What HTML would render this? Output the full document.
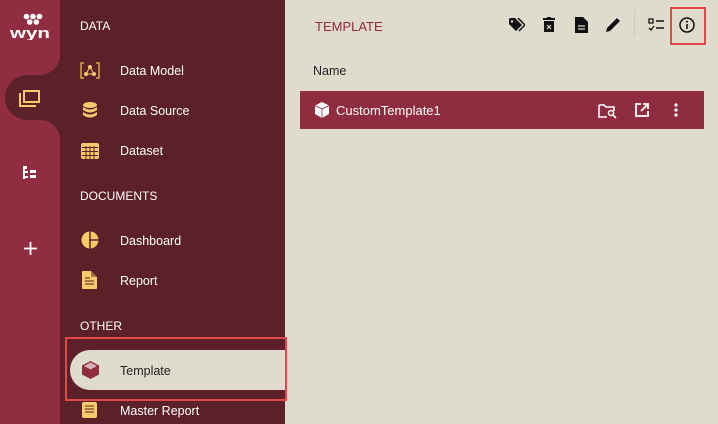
<!DOCTYPE html>
<html><head><style>
*{margin:0;padding:0;box-sizing:border-box}
body{width:718px;height:424px;overflow:hidden;background:#e0dccd;font-family:"Liberation Sans",sans-serif;position:relative}
.rail{position:absolute;left:0;top:0;width:60px;height:424px;background:#902d41}
.side{position:absolute;left:60px;top:0;width:225px;height:424px;background:#5c2029}
.bump{position:absolute;left:5px;top:75px;width:60px;height:45px;background:#5c2029;border-radius:23px 0 0 23px}
.c1{position:absolute;left:40px;top:55px;width:20px;height:20px;background:#5c2029}
.c1 i{position:absolute;left:0;top:0;width:20px;height:20px;background:#902d41;border-radius:0 0 20px 0}
.c2{position:absolute;left:40px;top:120px;width:20px;height:20px;background:#5c2029}
.c2 i{position:absolute;left:0;top:0;width:20px;height:20px;background:#902d41;border-radius:0 20px 0 0}
.t{position:absolute;color:#fff;font-size:12.5px}
.h{position:absolute;left:80px;color:#fff;font-size:12px}
.ic{position:absolute}
.pill{position:absolute;left:70px;top:350px;width:215px;height:40px;background:#e0dccd;border-radius:20px 0 0 20px}
.box{position:absolute;border:2px solid #e0484b}
</style></head><body>
<div class="rail"></div>
<div class="side"></div>
<div class="c1"><i></i></div><div class="c2"><i></i></div>
<div class="bump"></div>
<svg class="ic" style="left:9px;top:12px" width="42" height="28" viewBox="0 0 42 28"><g fill="#fff"><circle cx="17.5" cy="4.5" r="2.8"/><circle cx="24" cy="4.5" r="2.8"/><circle cx="30.5" cy="4.5" r="2.8"/><circle cx="20.7" cy="10" r="2.8"/><circle cx="27.3" cy="10" r="2.8"/></g><text x="1" y="26" fill="#fff" font-size="15" font-weight="bold" font-family="Liberation Sans" textLength="40" lengthAdjust="spacingAndGlyphs">wyn</text></svg>
<svg class="ic" style="left:19px;top:89px" width="22" height="18" viewBox="0 0 22 18"><path d="M1 4v13h16" fill="none" stroke="#f4cd6a" stroke-width="2"/><rect x="5" y="2" width="15" height="11" fill="none" stroke="#f4cd6a" stroke-width="2"/></svg>
<svg class="ic" style="left:23px;top:166px" width="16" height="14"><g fill="#fff"><rect x="0" y="0" width="4" height="3"/><rect x="0" y="3" width="2" height="10"/><rect x="0" y="5" width="5" height="2"/><rect x="0" y="10" width="5" height="2"/><rect x="7" y="4" width="6" height="3"/><rect x="7" y="9" width="6" height="3"/></g></svg>
<svg class="ic" style="left:24px;top:242px" width="13" height="13"><path d="M6.5 0v13M0 6.5h13" stroke="#fff" stroke-width="1.8"/></svg>

<div class="h" style="top:19px">DATA</div>
<div class="h" style="top:189px">DOCUMENTS</div>
<div class="h" style="top:319px">OTHER</div>

<svg class="ic" style="left:80px;top:62px" width="20" height="17"><path d="M4 1H1v15h3M16 1h3v15h-3" fill="none" stroke="#d9a94c" stroke-width="1.5"/><g fill="#f4cd6a"><circle cx="10" cy="5" r="2"/><circle cx="6" cy="12" r="2"/><circle cx="14" cy="12" r="2"/></g><path d="M10 5L6 12h8z" fill="none" stroke="#f4cd6a"/></svg>
<div class="t" style="left:120px;top:64px">Data Model</div>
<svg class="ic" style="left:82px;top:102px" width="16" height="16"><g fill="#f4cd6a"><ellipse cx="8" cy="3" rx="7" ry="3"/><path d="M1 5q7 5 14 0v3q-7 5-14 0z"/><path d="M1 10q7 5 14 0v3q-7 5-14 0z"/></g></svg>
<div class="t" style="left:120px;top:104px">Data Source</div>
<svg class="ic" style="left:81px;top:143px" width="18" height="16"><rect x="0" y="0" width="18" height="16" rx="2" fill="#f4cd6a"/><g stroke="#5c2029" stroke-width="1"><path d="M1 4.5h16M1 8.5h16M1 12.5h16M5 3v13M9 3v13M13 3v13"/></g></svg>
<div class="t" style="left:120px;top:144px">Dataset</div>

<svg class="ic" style="left:81px;top:231px" width="18" height="18"><circle cx="9" cy="9" r="8.5" fill="#f4cd6a"/><path d="M9 0v18M9 9h9" stroke="#5c2029" stroke-width="1.5"/></svg>
<div class="t" style="left:120px;top:234px">Dashboard</div>
<svg class="ic" style="left:82px;top:271px" width="15" height="18"><path d="M0 1q0-1 1-1h8l6 6v11q0 1-1 1H1q-1 0-1-1z" fill="#f4cd6a"/><path d="M9 0v6h6" fill="#5c2029" opacity=".5"/><path d="M3 10h9M3 13h9M3 7h5" stroke="#5c2029"/></svg>
<div class="t" style="left:120px;top:274px">Report</div>

<div class="pill"></div>
<svg class="ic" style="left:82px;top:361px" width="17" height="18"><path d="M8.5 0L17 4.5v9L8.5 18 0 13.5v-9z" fill="#8f2c40"/><path d="M8.5 1.5L15 5 8.5 8.5 2 5z" fill="#d9b0b6"/></svg>
<div class="t" style="left:120px;top:364px;color:#222">Template</div>
<svg class="ic" style="left:82px;top:402px" width="15" height="16"><rect width="15" height="16" rx="2" fill="#f4cd6a"/><path d="M3 4h9M3 7h9M3 10h9" stroke="#5c2029"/></svg>
<div class="t" style="left:120px;top:404px">Master Report</div>
<div class="box" style="left:65px;top:337px;width:222px;height:64px"></div>

<div style="position:absolute;left:315px;top:19px;font-size:13px;color:#8f2c40">TEMPLATE</div>
<svg class="ic" style="left:509px;top:18px" width="16" height="14"><path d="M0 1v5l7 7 6-6-7-7H1z" fill="#111"/><path d="M9 0l7 7-6 6" fill="none" stroke="#111" stroke-width="1.5"/><circle cx="3" cy="3.5" r="1.2" fill="#e0dccd"/></svg>
<svg class="ic" style="left:543px;top:17px" width="12" height="15"><rect x="0" y="1" width="12" height="2" fill="#111"/><rect x="4" y="0" width="4" height="2" fill="#111"/><rect x="1" y="4" width="10" height="11" fill="#111"/><path d="M4 8l4 4M8 8l-4 4" stroke="#e0dccd" stroke-width="1.2"/></svg>
<svg class="ic" style="left:575px;top:17px" width="13" height="16"><path d="M0 0h8l5 5v11H0z" fill="#111"/><path d="M3 9h7M3 12h7" stroke="#e0dccd" stroke-width="1.3"/></svg>
<svg class="ic" style="left:606px;top:17px" width="15" height="15"><path d="M0 15l1-4L11 1l3 3L4 14z" fill="#111"/></svg>
<div style="position:absolute;left:634px;top:10px;width:1px;height:26px;background:#cfcabb"></div>
<svg class="ic" style="left:648px;top:18px" width="16" height="14"><path d="M1 1h4v4H1z" fill="none" stroke="#111" stroke-width="1.3"/><path d="M8 3h8M8 10h8" stroke="#111" stroke-width="1.5"/><path d="M1 10l2 2 3-4" fill="none" stroke="#111" stroke-width="1.3"/></svg>
<svg class="ic" style="left:679px;top:17px" width="16" height="16"><circle cx="8" cy="8" r="7" fill="none" stroke="#111" stroke-width="1.5"/><path d="M8 7v5" stroke="#111" stroke-width="1.6"/><circle cx="8" cy="4.6" r="1" fill="#111"/></svg>
<div class="box" style="left:670px;top:7px;width:36px;height:38px"></div>

<div style="position:absolute;left:313px;top:64px;font-size:12.5px;color:#222">Name</div>
<div style="position:absolute;left:300px;top:91px;width:404px;height:38px;background:#8f2c40"></div>
<svg class="ic" style="left:315px;top:102px" width="14" height="16"><path d="M7 0l7 3.5v8.5L7 16 0 12V3.5z" fill="#fff"/><path d="M0 3.5L7 7l7-3.5M7 7v9" stroke="#8f2c40" stroke-width=".8" fill="none"/></svg>
<div class="t" style="left:336px;top:103px;font-size:13px">CustomTemplate1</div>
<svg class="ic" style="left:598px;top:103px" width="19" height="16"><path d="M1 2h5l2 2h8v4" fill="none" stroke="#fff" stroke-width="1.6"/><path d="M1 2v12h8" fill="none" stroke="#fff" stroke-width="1.6"/><circle cx="13" cy="10" r="2.5" fill="none" stroke="#fff" stroke-width="1.5"/><path d="M15 12l3 3" stroke="#fff" stroke-width="1.6"/></svg>
<svg class="ic" style="left:635px;top:103px" width="14" height="14"><path d="M6 1H1v12h12V8" fill="none" stroke="#fff" stroke-width="1.8"/><path d="M8 1h5v5M13 1L6 8" fill="none" stroke="#fff" stroke-width="1.8"/></svg>
<svg class="ic" style="left:674px;top:103px" width="4" height="14"><g fill="#fff"><circle cx="2" cy="2" r="1.6"/><circle cx="2" cy="7" r="1.6"/><circle cx="2" cy="12" r="1.6"/></g></svg>
</body></html>
